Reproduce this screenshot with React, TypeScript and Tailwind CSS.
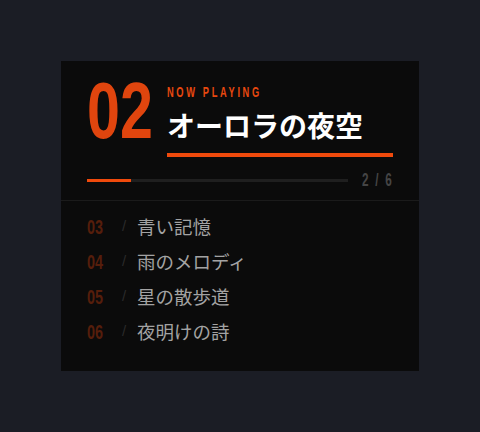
import React from "react";

const lib = { fontFamily: '"Liberation Sans", Arial, sans-serif' };
const jp = { fontFamily: '"Noto Sans CJK JP", "Noto Sans", sans-serif' };

const tracks = [
  { n: "03", t: "青い記憶" },
  { n: "04", t: "雨のメロディ" },
  { n: "05", t: "星の散歩道" },
  { n: "06", t: "夜明けの詩" },
];

export default function App() {
  return (
    <div className="w-[480px] h-[432px] bg-[#1b1d25] flex items-center justify-center">
      <div className="w-[358px] h-[310px] bg-[#0b0b0b] flex flex-col">
        <div className="px-[26px] pt-[10px]">
          <div className="flex items-start">
            <div className="w-[80px] shrink-0 whitespace-nowrap">
              <div
                className="inline-block origin-left scale-x-[0.74] text-[80px] leading-[80px] font-bold text-[#e0450e]"
                style={lib}
              >
                02
              </div>
            </div>
            <div className="flex-1 pt-[8px]">
              <div className="h-[16px] whitespace-nowrap">
                <div
                  className="inline-block origin-left scale-x-[0.6] text-[15.5px] leading-[16px] font-bold tracking-[4.4px] text-[#e8480f]"
                  style={lib}
                >
                  NOW PLAYING
                </div>
              </div>
              <div className="mt-[11px] text-[28px] leading-[38px] font-bold text-white" style={jp}>
                オーロラの夜空
              </div>
              <div className="mt-[9px] h-[4px] bg-[#f04a0c]" />
            </div>
          </div>
          <div className="mt-[12px] flex items-center gap-[14px] h-[22px]">
            <div className="flex-1 h-[3px] bg-[#1f1f1f]">
              <div className="h-full w-[17%] bg-[#f04a0c]" />
            </div>
            <div className="w-[31px] whitespace-nowrap">
              <div
                className="inline-block origin-left scale-x-[0.62] text-[19px] leading-[22px] font-bold tracking-[2.8px] text-[#454545]"
                style={lib}
              >
                2 / 6
              </div>
            </div>
          </div>
        </div>
        <div className="mt-[9px] h-[1px] bg-[#1b1b1b]" />
        <div className="px-[26px] pt-[8px] flex flex-col">
          {tracks.map((r) => (
            <div key={r.n} className="flex items-center h-[35px]">
              <span className="w-[35px] whitespace-nowrap">
                <span
                  className="inline-block origin-left scale-x-[0.72] text-[20px] font-bold text-[#561e0b]"
                  style={lib}
                >
                  {r.n}
                </span>
              </span>
              <span className="w-[15px] text-[15px] text-[#2a2a2a]" style={lib}>/</span>
              <span className="text-[18.5px] text-[#a3a3a3]" style={jp}>{r.t}</span>
            </div>
          ))}
        </div>
      </div>
    </div>
  );
}
